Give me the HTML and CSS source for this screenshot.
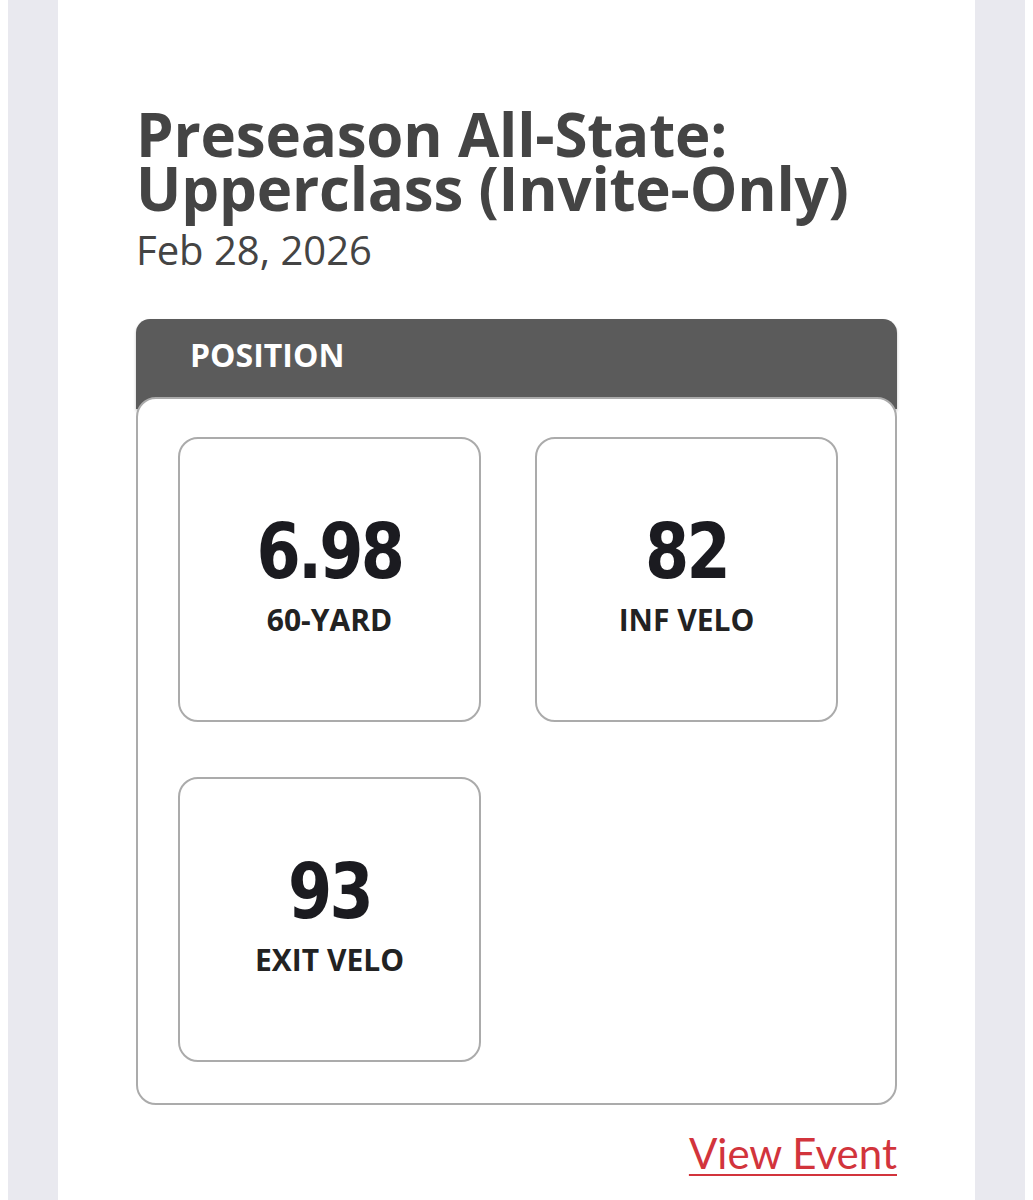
FILE: index.html
```html
<!DOCTYPE html>
<html>
<head>
<meta charset="utf-8">
<link rel="stylesheet" href="styles.css">
</head>
<body>
<div class="page">
  <main class="content">
    <h1 class="title">Preseason All-State:<br>Upperclass (Invite-Only)</h1>
    <div class="date">Feb 28, 2026</div>
    <section class="card">
      <div class="card-head">POSITION</div>
      <div class="card-body">
        <div class="stat"><div class="stat-value">6.98</div><div class="stat-label">60-YARD</div></div>
        <div class="stat"><div class="stat-value">82</div><div class="stat-label">INF VELO</div></div>
        <div class="stat"><div class="stat-value">93</div><div class="stat-label">EXIT VELO</div></div>
      </div>
    </section>
    <div class="actions"><a class="link" href="#">View Event</a></div>
  </main>
</div>
</body>
</html>
```

FILE: styles.css
```css
html { background: #ffffff; }
body { margin: 0 8px; background: #e9e9ef; }
.page { padding: 0 50px; }
.content {
  background: #ffffff;
  min-height: 1200px;
  padding: 107px 78px 0 78px;
  box-sizing: border-box;
}
.title {
  margin: 0;
  font-family: "Open Sans", sans-serif;
  font-weight: 700;
  font-size: 60px;
  line-height: 54px;
  color: #444444;
  letter-spacing: -0.2px;
}
.date {
  margin-top: 12px;
  font-family: "Open Sans", sans-serif;
  font-size: 40px;
  line-height: 46px;
  color: #444444;
}
.card { margin-top: 46px; }
.card-head {
  background: #5b5b5b;
  height: 90px;
  border-radius: 14px 14px 0 0;
  box-sizing: border-box;
  padding: 14px 0 0 54px;
  font-family: "Open Sans", sans-serif;
  font-weight: 700;
  font-size: 32px;
  line-height: 44px;
  color: #ffffff;
  box-shadow: 0 2px 3px rgba(0,0,0,0.25);
}
.card-body {
  position: relative;
  margin-top: -12px;
  background: #ffffff;
  border: 2px solid #ababab;
  border-radius: 20px;
  padding: 38px 40px 41px 40px;
  display: grid;
  grid-template-columns: 303px 303px;
  column-gap: 54px;
  row-gap: 55px;
}
.stat {
  height: 285px;
  box-sizing: border-box;
  border: 2px solid #ababab;
  border-radius: 20px;
  display: flex;
  flex-direction: column;
  align-items: center;
  justify-content: center;
  padding-bottom: 11px;
}
.stat-value {
  font-family: "DejaVu Sans Condensed", "DejaVu Sans", sans-serif;
  font-weight: 700;
  font-size: 76px;
  line-height: 88px;
  color: #1b1b20;
  letter-spacing: -3px;
  transform: scaleX(0.93);
}
.stat-label {
  margin-top: 3px;
  font-family: "Open Sans", sans-serif;
  font-weight: 700;
  font-size: 30px;
  line-height: 41px;
  color: #222222;
}
.actions {
  display: flex;
  justify-content: flex-end;
  margin-top: 23px;
}
.link {
  font-family: Lato, sans-serif;
  font-size: 42px;
  line-height: 50px;
  color: #d2343c;
  text-decoration: underline;
  text-decoration-thickness: 2px;
  text-underline-offset: 5px;
}
```
